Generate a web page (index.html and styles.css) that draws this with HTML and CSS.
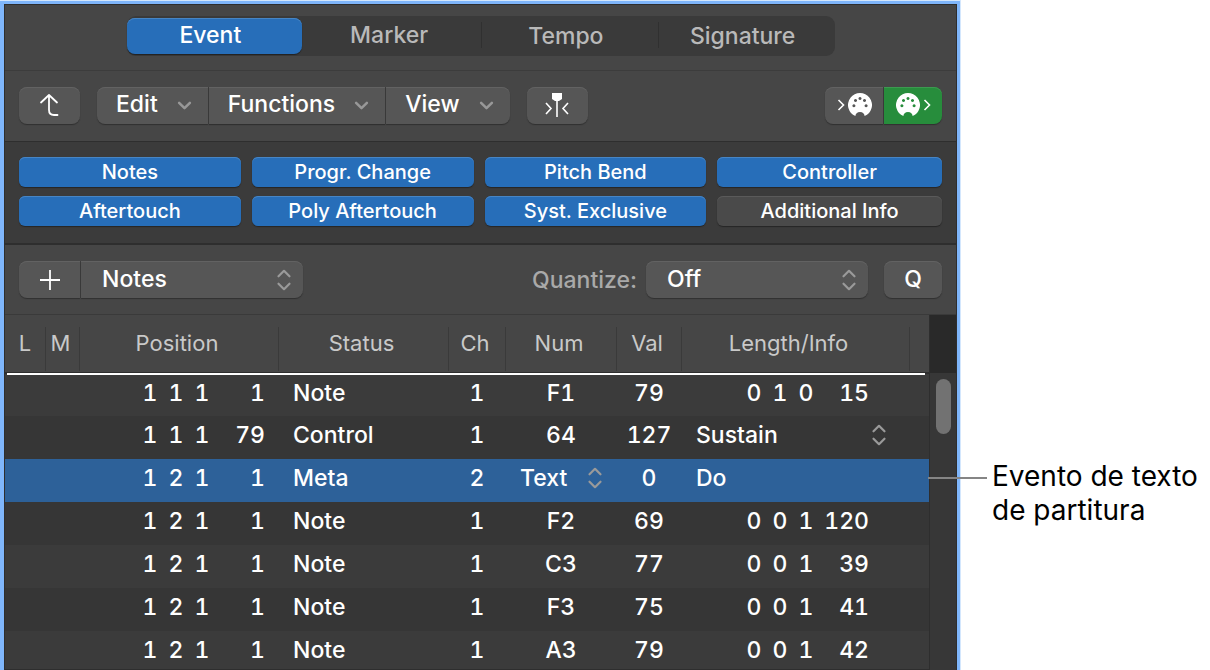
FILE: index.html
```
<!DOCTYPE html>
<html lang="es">
<head>
    <meta charset="UTF-8">
    <meta name="viewport" content="width=device-width, initial-scale=1.0">
    <title>Event List</title>
    <link rel="stylesheet" href="styles.css">
</head>
<body>
    <!-- shared icons -->
    <svg class="icon-defs" width="0" height="0" aria-hidden="true">
        <symbol id="chevron" viewBox="0 0 16 10">
            <path d="M2 2l6 6 6-6" fill="none" stroke="currentColor" stroke-width="2.8" stroke-linecap="round" stroke-linejoin="round"/>
        </symbol>
        <symbol id="updown" viewBox="0 0 16 24">
            <path d="M2 8l6-6 6 6M2 16l6 6 6-6" fill="none" stroke="currentColor" stroke-width="2.4" stroke-linecap="round" stroke-linejoin="round"/>
        </symbol>
        <symbol id="midi" viewBox="0 0 24 24">
            <path fill="currentColor" fill-rule="evenodd" d="M7.4 23.1A12 12 0 1 1 16.6 23.1C16.600 20.600 14.800 18.900 12 18.900S7.400 20.600 7.400 23.100zM5.900 11.200a1.500 1.500 0 1 0 .01 0zM7.500 5.900a1.500 1.500 0 1 0 .01 0zM12 4.100a1.500 1.500 0 1 0 .01 0zM16.500 5.900a1.500 1.500 0 1 0 .01 0zM18.100 11.200a1.500 1.500 0 1 0 .01 0z"/>
        </symbol>
        <symbol id="angle" viewBox="0 0 8 12">
            <path d="M1.5 1l5 5-5 5" fill="none" stroke="currentColor" stroke-width="1.6"/>
        </symbol>
    </svg>

    <main class="panel">
        <div class="tab-bar">
            <div class="tabs" role="tablist">
                <button class="tab active" role="tab" aria-selected="true">Event</button>
                <button class="tab" role="tab">Marker</button>
                <button class="tab" role="tab">Tempo</button>
                <button class="tab" role="tab">Signature</button>
            </div>
        </div>

        <div class="toolbar">
            <button class="btn square" aria-label="Up">
                <svg width="22" height="24" viewBox="0 0 22 24"><path d="M2 9.500L10 2l8 7.500M10 2v15q0 5 5 5h3.500" fill="none" stroke="#fff" stroke-width="1.8" stroke-linecap="round" stroke-linejoin="round"/></svg>
            </button>
            <div class="group">
                <button class="btn menu">Edit <svg class="chevron"><use href="#chevron"/></svg></button>
                <button class="btn menu">Functions <svg class="chevron"><use href="#chevron"/></svg></button>
                <button class="btn menu">View <svg class="chevron"><use href="#chevron"/></svg></button>
            </div>
            <button class="btn square" aria-label="Catch playhead">
                <svg width="24" height="26" viewBox="0 0 24 26"><path d="M7 1h10v6l-3 2h-4L7 7z" fill="#fff"/><path d="M12 8v17M1 11l5 5.500-5 5.500M23 11l-5 5.500 5 5.500" fill="none" stroke="#fff" stroke-width="1.6"/></svg>
            </button>
            <div class="group push">
                <button class="btn midi" aria-label="MIDI In">
                    <svg class="angle"><use href="#angle"/></svg>
                    <svg class="midi-icon"><use href="#midi"/></svg>
                </button>
                <button class="btn midi on" aria-label="MIDI Out">
                    <svg class="midi-icon"><use href="#midi"/></svg>
                    <svg class="angle"><use href="#angle"/></svg>
                </button>
            </div>
        </div>

        <div class="filters">
            <button class="filter on">Notes</button>
            <button class="filter on">Progr. Change</button>
            <button class="filter on">Pitch Bend</button>
            <button class="filter on">Controller</button>
            <button class="filter on">Aftertouch</button>
            <button class="filter on">Poly Aftertouch</button>
            <button class="filter on">Syst. Exclusive</button>
            <button class="filter">Additional Info</button>
        </div>

        <div class="add-bar">
            <div class="group">
                <button class="btn square" aria-label="Add event">
                    <svg width="22" height="22" viewBox="0 0 22 22"><path d="M11 1v20M1 11h20" stroke="#fff" stroke-width="1.8"/></svg>
                </button>
                <div class="picker">
                    <select class="btn" aria-label="Event type"><option>Notes</option></select>
                    <svg class="updown"><use href="#updown"/></svg>
                </div>
            </div>
            <label class="push" for="quantize">Quantize:</label>
            <div class="picker">
                <select class="btn" id="quantize"><option>Off</option></select>
                <svg class="updown"><use href="#updown"/></svg>
            </div>
            <button class="btn q">Q</button>
        </div>

        <div class="list">
            <div class="list-body">
                <table>
                    <colgroup>
                        <col class="c-l"><col class="c-m"><col class="c-pos"><col class="c-status"><col class="c-ch"><col class="c-num"><col class="c-val"><col><col class="c-end">
                    </colgroup>
                    <thead>
                        <tr>
                            <th><span>L</span></th>
                            <th><span>M</span></th>
                            <th><span>Position</span></th>
                            <th><span>Status</span></th>
                            <th><span>Ch</span></th>
                            <th><span>Num</span></th>
                            <th><span>Val</span></th>
                            <th><span class="info">Length/Info</span></th>
                            <th></th>
                        </tr>
                    </thead>
                    <tbody>
                        <tr>
                            <td></td><td></td>
                            <td><div class="ticks"><i>1</i><i>1</i><i>1</i><b>1</b></div></td>
                            <td class="status">Note</td><td>1</td><td>F1</td><td>79</td>
                            <td><div class="ticks length"><i>0</i><i>1</i><i>0</i><b>15</b></div></td><td></td>
                        </tr>
                        <tr>
                            <td></td><td></td>
                            <td><div class="ticks"><i>1</i><i>1</i><i>1</i><b>79</b></div></td>
                            <td class="status">Control</td><td>1</td><td>64</td><td>127</td>
                            <td><div class="cell-picker wide"><select aria-label="Controller"><option>Sustain</option></select><svg class="updown"><use href="#updown"/></svg></div></td><td></td>
                        </tr>
                        <tr class="selected">
                            <td></td><td></td>
                            <td><div class="ticks"><i>1</i><i>2</i><i>1</i><b>1</b></div></td>
                            <td class="status">Meta</td><td>2</td>
                            <td><div class="cell-picker"><select aria-label="Meta type"><option>Text</option></select><svg class="updown"><use href="#updown"/></svg></div></td>
                            <td>0</td><td class="status">Do</td><td></td>
                        </tr>
                        <tr>
                            <td></td><td></td>
                            <td><div class="ticks"><i>1</i><i>2</i><i>1</i><b>1</b></div></td>
                            <td class="status">Note</td><td>1</td><td>F2</td><td>69</td>
                            <td><div class="ticks length"><i>0</i><i>0</i><i>1</i><b>120</b></div></td><td></td>
                        </tr>
                        <tr>
                            <td></td><td></td>
                            <td><div class="ticks"><i>1</i><i>2</i><i>1</i><b>1</b></div></td>
                            <td class="status">Note</td><td>1</td><td>C3</td><td>77</td>
                            <td><div class="ticks length"><i>0</i><i>0</i><i>1</i><b>39</b></div></td><td></td>
                        </tr>
                        <tr>
                            <td></td><td></td>
                            <td><div class="ticks"><i>1</i><i>2</i><i>1</i><b>1</b></div></td>
                            <td class="status">Note</td><td>1</td><td>F3</td><td>75</td>
                            <td><div class="ticks length"><i>0</i><i>0</i><i>1</i><b>41</b></div></td><td></td>
                        </tr>
                        <tr>
                            <td></td><td></td>
                            <td><div class="ticks"><i>1</i><i>2</i><i>1</i><b>1</b></div></td>
                            <td class="status">Note</td><td>1</td><td>A3</td><td>79</td>
                            <td><div class="ticks length"><i>0</i><i>0</i><i>1</i><b>42</b></div></td><td></td>
                        </tr>
                    </tbody>
                </table>
            </div>
            <div class="scrollbar">
                <div class="corner"></div>
                <div class="thumb"></div>
            </div>
        </div>
    </main>

    <aside class="callout">
        <p>Evento de texto de partitura</p>
    </aside>
</body>
</html>
```
FILE: styles.css
```
:root {
    --bar: #464646;
    --dark: #3b3b3b;
    --line: #2e2e2e;
    --button: #565656;
    --blue: #276eb9;
    --green: #278d3c;
    --outline: #7fb6fb;
}

* {
    box-sizing: border-box;
}
body {
    margin: 0;
    height: 100vh;
    overflow: hidden;
    display: flex;
    background: #fff;
    color: #fff;
    font-family: Inter, 'Liberation Sans', sans-serif;
    font-size: 23px;
    font-weight: 500;
}
button, select {
    font: inherit;
    color: inherit;
    border: none;
    padding: 0;
    margin: 0;
}
.icon-defs {
    position: absolute;
}
.panel {
    flex: 1;
    min-width: 0;
    margin-top: 1px;
    border: 3px solid var(--outline);
    border-left-width: 4px;
    border-bottom: none;
    outline: 1px solid #d4e7fd;
    margin-right: 1px;
    display: flex;
    flex-direction: column;
    background: var(--dark);
    box-shadow: inset 0 0 0 1px var(--line);
    padding: 1px 1px 0;
}

/* tabs */
.tab-bar {
    height: 66px;
    padding-top: 11px;
    background: var(--bar);
    border-bottom: 1px solid #3c3c3c;
    display: flex;
    justify-content: center;
    align-items: flex-start;
}
.tabs {
    display: flex;
    width: 708px;
    height: 40px;
    padding: 2px 0;
    border-radius: 9px;
    background: #3a3a3a;
}
.tab {
    flex: 1;
    height: 36px;
    padding: 0 8px 2px 0;
    background: none;
    color: #b9b9b9;
    border-radius: 8px;
}
.tab.active {
    margin: 0 3px 0 0;
    background: var(--blue);
    color: #fff;
    box-shadow: 0 1px 1px #222, inset 0 1px #4785c4;
}
.tab + .tab + .tab {
    border-left: 1px solid #303030;
    border-radius: 0;
    height: 26px;
    margin-top: 4px;
}

/* toolbars */
.toolbar, .add-bar {
    height: 71px;
    padding: 0 14px;
    display: flex;
    align-items: center;
    background: var(--bar);
    border-bottom: 1px solid var(--line);
}
.toolbar {
    gap: 17px;
    padding-bottom: 2px;
}
.push {
    margin-left: auto;
}
.btn {
    height: 37px;
    padding-bottom: 2px;
    border-radius: 8px;
    background: var(--button);
    box-shadow: 0 1px 1px #303030, inset 0 1px #626262;
    display: flex;
    align-items: center;
    justify-content: center;
}
.square, .midi {
    padding-bottom: 0;
}
.square {
    width: 61px;
}
.group {
    display: flex;
    gap: 1px;
    border-radius: 8px;
    background: #3e3e3e;
}
.group > :not(:last-child), .group > :not(:last-child) .btn {
    border-top-right-radius: 0;
    border-bottom-right-radius: 0;
}
.group > :not(:first-child), .group > :not(:first-child) .btn {
    border-top-left-radius: 0;
    border-bottom-left-radius: 0;
}
.menu {
    padding: 0 16px 2px 19px;
    gap: 19px;
}
.chevron {
    width: 15px;
    height: 9px;
    margin-top: 2px;
    color: #989898;
}
.midi {
    width: 58px;
    gap: 3px;
}
.midi.on {
    background: var(--green);
    box-shadow: 0 1px 1px #303030, inset 0 1px #3c9a50;
}
.midi-icon {
    width: 24px;
    height: 24px;
}
.angle {
    width: 8px;
    height: 12px;
}

/* event type filters */
.filters {
    display: grid;
    grid-template-columns: 222fr 222fr 222fr 225fr;
    gap: 9px 11px;
    padding: 15px 14px 17px;
    border-bottom: 2px solid var(--line);
}
.filter {
    height: 30px;
    border-radius: 6px;
    background: #4a4a4a;
    box-shadow: 0 1px 1px #262626, inset 0 1px #5a5a5a;
    font-size: 20px;
}
.filter.on {
    background: var(--blue);
    box-shadow: 0 1px 1px #262626, inset 0 1px #4785c4;
}

.add-bar {
    height: 70px;
    border-bottom-color: #3a3a3a;
}
.add-bar label {
    color: #a9a9a9;
    margin-right: 9px;
}
.picker {
    position: relative;
    width: 222px;
    margin-right: 16px;
}
.picker select {
    width: 100%;
    padding-left: 21px;
    appearance: none;
}
.picker .updown {
    position: absolute;
    right: 11px;
    top: 8px;
    pointer-events: none;
}
.group .picker {
    margin-right: 0;
}
.updown {
    width: 16px;
    height: 22px;
    color: #9a9a9a;
}
.q {
    width: 58px;
}

/* event list */
.list {
    flex: 1;
    min-height: 0;
    display: flex;
}
.list-body {
    flex: 1;
    overflow: hidden;
    position: relative;
}
/* insertion line over the first row */
.list-body::after {
    content: '';
    position: absolute;
    left: 2px;
    right: 4px;
    top: 58px;
    height: 2px;
    background: #fff;
}
table {
    width: 100%;
    table-layout: fixed;
    border-collapse: collapse;
    font-variant-numeric: tabular-nums;
}
.c-l { width: 41px; }
.c-m { width: 34px; }
.c-pos { width: 199px; }
.c-status { width: 170px; }
.c-ch { width: 57px; }
.c-num { width: 111px; }
.c-val { width: 65px; }
.c-end { width: 19px; }
th {
    height: 58px;
    padding: 12px 0 0;
    vertical-align: top;
    background: var(--bar);
    border-bottom: 2px solid var(--line);
    color: #c9c9c9;
    font-size: 22px;
    font-weight: 400;
}
th span {
    display: block;
    height: 44px;
    line-height: 32px;
    padding-right: 4px;
    border-right: 1px solid #3a3a3a;
}
th:first-child span {
    padding-right: 0;
}
th .info {
    padding-right: 14px;
}
td {
    height: 43px;
    padding: 0 1px 5px 0;
    text-align: center;
}
tbody tr:nth-child(even) {
    background: #363636;
}
tbody tr.selected {
    background: #2d6199;
}
.status {
    padding-left: 14px;
    text-align: left;
}
.ticks {
    display: grid;
    grid-template-columns: 26px 26px 26px 50px;
    justify-content: start;
    padding-left: 57px;
}
.ticks.length {
    padding-left: 59px;
}
.ticks i {
    font-style: normal;
}
.ticks b {
    font-weight: inherit;
    text-align: right;
}
.cell-picker {
    display: flex;
    align-items: center;
    justify-content: space-between;
    padding: 0 13px 0 14px;
}
.cell-picker.wide {
    padding-right: 22px;
}
.cell-picker select {
    appearance: none;
    background: none;
}
.scrollbar {
    width: 27px;
    background: #373737;
    border-left: 1px solid var(--line);
}
.corner {
    height: 58px;
    background: #292929;
}
.thumb {
    width: 15px;
    height: 55px;
    margin: 6px;
    border-radius: 8px;
    background: #727272;
}

/* note beside the panel */
.callout {
    position: relative;
    width: 249px;
    padding: 459px 0 0 31px;
    color: #000;
    font-size: 28px;
    font-weight: 400;
    line-height: 34px;
}
.callout::before {
    content: '';
    position: absolute;
    left: -33px;
    top: 477px;
    width: 59px;
    height: 2px;
    background: #858585;
}
.callout p {
    margin: 0;
}
```
